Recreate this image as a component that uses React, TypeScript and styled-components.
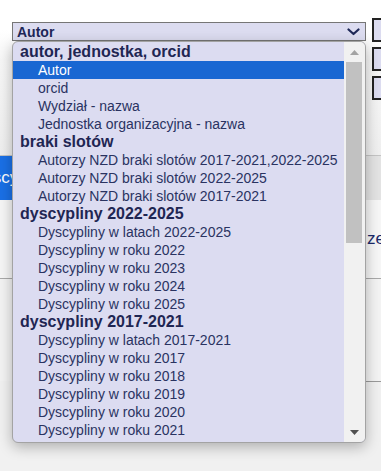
import React from "react";
import styled, { createGlobalStyle } from "styled-components";

const Global = createGlobalStyle`
  html, body { margin: 0; padding: 0; }
  body { font-family: "Liberation Sans", Arial, sans-serif; background: #f2f2f2; }
`;

const Page = styled.div`
  width: 381px;
  height: 471px;
  overflow: hidden;
  position: relative;
  background: #f1f1f1;
`;

const Header = styled.div`
  display: flex;
  align-items: flex-start;
  gap: 6px;
  padding: 18px 0 0 12px;
  height: 155px;
  box-sizing: border-box;
  background: linear-gradient(#ffffff 0px, #ffffff 30px, #f7f7f7 60px, #efefef 155px);
`;

const SelectWrap = styled.div`
  position: relative;
  margin-top: 4px;
  width: 354px;
  flex: none;
`;

const SelectBox = styled.div`
  box-sizing: border-box;
  height: 19px;
  border: 1px solid #767676;
  background: #dcdcf0;
  display: flex;
  align-items: center;
  justify-content: space-between;
  padding: 0 5px 0 4px;
  font-size: 14px;
  font-weight: bold;
  color: #1e2858;
`;

const ButtonColumn = styled.div`
  display: flex;
  flex-direction: column;
  gap: 5px;
  flex: none;
`;

const SideButton = styled.div`
  width: 20px;
  height: 24px;
  box-sizing: border-box;
  border: 2px solid #222;
  background: #dcdcf0;
`;

const TabBar = styled.div`
  display: flex;
  height: 45px;
  box-sizing: border-box;
  border-top: 1px solid #c4c4c4;
  background: #e3e3e3;
  margin-left: -40px;
`;

const ActiveTab = styled.div`
  background: #1a70e6;
  color: #fff;
  font-size: 17px;
  display: flex;
  align-items: center;
  padding: 0 20px 0 12px;
`;

const Content = styled.div`
  display: flex;
  justify-content: flex-start;
  align-items: center;
  height: 79px;
  box-sizing: border-box;
  padding-left: 367px;
  background: #f6f6f6;
  border-bottom: 1px solid #a9a9a9;
  color: #1c2a6a;
  font-size: 17px;
  white-space: nowrap;
  overflow: hidden;
`;

const Lower = styled.div`
  height: 102px;
  background: #f3f3f3;
`;

const Bottom = styled.div`
  margin-left: 60px;
  border-top: 1px solid #9a9a9a;
  height: 100px;
  background: #f0f0f0;
`;

const Dropdown = styled.div`
  position: absolute;
  top: 19px;
  left: 0;
  width: 354px;
  height: 402px;
  box-sizing: border-box;
  border: 1px solid #a3a3a3;
  border-radius: 6px;
  background: #dcdcf1;
  box-shadow: 0 4px 14px rgba(0, 0, 0, 0.28);
  overflow: hidden;
  display: grid;
  grid-template-columns: 1fr 21px;
  z-index: 10;
`;

const Options = styled.div`
  padding-top: 1px;
  overflow: hidden;
  color: #2a3361;
`;

const Row = styled.div<{ $group?: boolean; $selected?: boolean }>`
  height: 18px;
  line-height: 18px;
  white-space: nowrap;
  padding-left: ${(p) => (p.$group ? "7px" : "25px")};
  font-size: ${(p) => (p.$group ? "16px" : "14px")};
  font-weight: ${(p) => (p.$group ? "bold" : "normal")};
  color: ${(p) => (p.$selected ? "#ffffff" : p.$group ? "#1f2653" : "#2a3361")};
  background: ${(p) => (p.$selected ? "#1967d2" : "transparent")};
`;

const Scrollbar = styled.div`
  background: #f1f1f1;
  display: flex;
  flex-direction: column;
  align-items: center;
  padding-right: 1px;
`;

const ArrowButton = styled.div`
  height: 20px;
  width: 100%;
  display: flex;
  align-items: center;
  justify-content: center;
  flex: none;
`;

const Thumb = styled.div`
  width: 16px;
  height: 181px;
  background: #c1c1c1;
  flex: none;
`;

const Spacer = styled.div`
  flex: 1;
`;

type Item = { label: string; group?: boolean; selected?: boolean };

const items: Item[] = [
  { label: "autor, jednostka, orcid", group: true },
  { label: "Autor", selected: true },
  { label: "orcid" },
  { label: "Wydział - nazwa" },
  { label: "Jednostka organizacyjna - nazwa" },
  { label: "braki slotów", group: true },
  { label: "Autorzy NZD braki slotów 2017-2021,2022-2025" },
  { label: "Autorzy NZD braki slotów 2022-2025" },
  { label: "Autorzy NZD braki slotów 2017-2021" },
  { label: "dyscypliny 2022-2025", group: true },
  { label: "Dyscypliny w latach 2022-2025" },
  { label: "Dyscypliny w roku 2022" },
  { label: "Dyscypliny w roku 2023" },
  { label: "Dyscypliny w roku 2024" },
  { label: "Dyscypliny w roku 2025" },
  { label: "dyscypliny 2017-2021", group: true },
  { label: "Dyscypliny w latach 2017-2021" },
  { label: "Dyscypliny w roku 2017" },
  { label: "Dyscypliny w roku 2018" },
  { label: "Dyscypliny w roku 2019" },
  { label: "Dyscypliny w roku 2020" },
  { label: "Dyscypliny w roku 2021" },
];

const Chevron = () => (
  <svg width="13" height="8" viewBox="0 0 13 8">
    <path d="M1.5 1.5 L6.5 6 L11.5 1.5" fill="none" stroke="#1e2858" strokeWidth="2.2" strokeLinecap="round" strokeLinejoin="round" />
  </svg>
);

const Triangle = ({ up, color }: { up?: boolean; color: string }) => (
  <svg width="9" height="5" viewBox="0 0 9 5">
    <polygon points={up ? "0,5 9,5 4.5,0" : "0,0 9,0 4.5,5"} fill={color} />
  </svg>
);

export default function App() {
  return (
    <>
      <Global />
      <Page>
        <Header>
          <SelectWrap>
            <SelectBox>
              <span>Autor</span>
              <Chevron />
            </SelectBox>
            <Dropdown>
              <Options>
                {items.map((it, i) => (
                  <Row key={i} $group={it.group} $selected={it.selected}>
                    {it.label}
                  </Row>
                ))}
              </Options>
              <Scrollbar>
                <ArrowButton>
                  <Triangle up color="#a3a3a3" />
                </ArrowButton>
                <Thumb />
                <Spacer />
                <ArrowButton>
                  <Triangle color="#505050" />
                </ArrowButton>
              </Scrollbar>
            </Dropdown>
          </SelectWrap>
          <ButtonColumn>
            <SideButton />
            <SideButton />
            <SideButton />
          </ButtonColumn>
        </Header>
        <TabBar>
          <ActiveTab>Dyscypliny</ActiveTab>
        </TabBar>
        <Content>
          <span>zestawienie</span>
        </Content>
        <Lower />
        <Bottom />
      </Page>
    </>
  );
}
